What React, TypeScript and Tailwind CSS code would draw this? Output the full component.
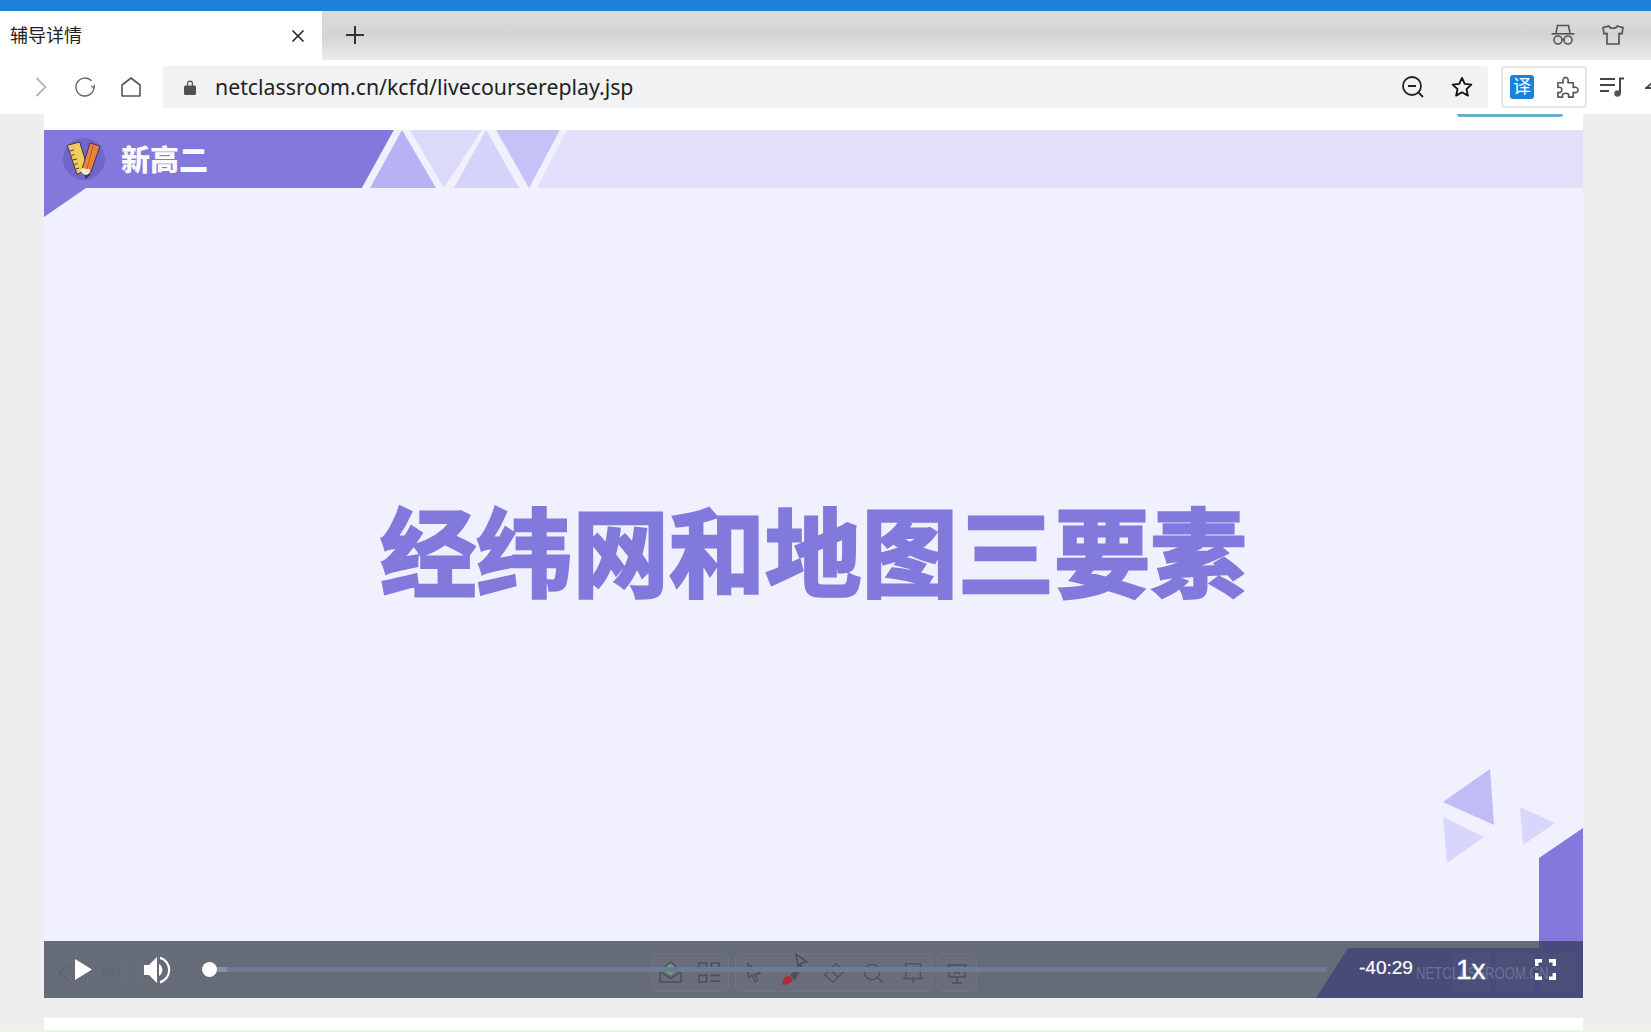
import React from "react";

const ghost = "#4c505e";

function Tab() {
  return (
    <div className="flex h-[49px] items-center bg-gradient-to-b from-[#dcdcdc] via-[#d4d4d4] to-[#ebebeb]">
      <div className="flex h-full w-[322px] items-center bg-white pl-[10px] pr-[17px]">
        <span className="flex-1 text-[18px] leading-[50px] text-[#222]">辅导详情</span>
        <svg width="14" height="14" viewBox="0 0 14 14" fill="none" stroke="#222" strokeWidth="1.6"><path d="M1.5 1.5 12.5 12.5M12.5 1.5 1.5 12.5" /></svg>
      </div>
      <svg className="ml-[23px] -mt-[2px]" width="20" height="20" viewBox="0 0 20 20" fill="none" stroke="#333" strokeWidth="2"><path d="M10 1v18M1 10h18" /></svg>
      <div className="flex-1" />
      <svg className="-mt-[2px]" width="24" height="21" viewBox="0 0 24 21" fill="none" stroke="#555" strokeWidth="1.6">
        <path d="M5 9 6.5 1.5h11L19 9" />
        <path d="M0.5 9.8h23" />
        <circle cx="7" cy="16" r="4" />
        <circle cx="17" cy="16" r="4" />
        <path d="M11 15.5h2" />
      </svg>
      <svg className="ml-[27px] mr-[27px] -mt-[2px]" width="22" height="20" viewBox="0 0 22 20" fill="none" stroke="#555" strokeWidth="1.7" strokeLinejoin="round">
        <path d="M7 1 1 2.6l1 6.2 3-.4V19h12V8.400l3 .4 1-6.200L15 1c-.6 3-7.400 3-8 0Z" />
      </svg>
    </div>
  );
}

function Toolbar() {
  return (
    <div className="flex h-[54px] items-center overflow-hidden bg-white">
      <svg className="ml-[35px] shrink-0" width="12" height="20" viewBox="0 0 12 20" fill="none" stroke="#b5b5b5" strokeWidth="1.800"><path d="M1.500 1 10.500 10 1.500 19" /></svg>
      <svg className="ml-[28px] shrink-0" width="20" height="20" viewBox="0 0 20 20" fill="none" stroke="#666" strokeWidth="1.400">
        <path d="M16.500 3.800A9 9 0 1 0 19 10" />
        <path d="M16.200 9.200l2.800 1.300 1-3" />
      </svg>
      <svg className="ml-[26px] shrink-0" width="20" height="20" viewBox="0 0 20 20" fill="none" stroke="#555" strokeWidth="1.600" strokeLinejoin="round">
        <path d="M1 19V8l9-7 9 7v11Z" />
      </svg>
      <div className="ml-[22px] flex h-[42px] w-[1325px] shrink-0 items-center rounded-[2px] bg-[#f1f2f4] pl-[21px]">
        <svg width="12" height="16" viewBox="0 0 12 16" fill="#505050">
          <path d="M3 7V4.500a3 3 0 0 1 6 0V7H7.800V4.500a1.800 1.800 0 0 0-3.600 0V7Z" />
          <rect x="0" y="6.500" width="12" height="9.500" rx="1.500" />
        </svg>
        <span className="ml-[19px] flex-1 font-['Noto_Sans','Open_Sans',sans-serif] text-[21.3px] leading-[42px] text-[#222]">netclassroom.cn/kcfd/livecoursereplay.jsp</span>
        <svg width="22" height="22" viewBox="0 0 22 22" fill="none" stroke="#222" strokeWidth="1.800">
          <circle cx="10" cy="10" r="9" />
          <path d="M6 10h8M16.500 16.500 21 21" />
        </svg>
        <svg className="ml-[27px] mr-[15px]" width="22" height="22" viewBox="0 0 24 24" fill="none" stroke="#111" strokeWidth="2" strokeLinejoin="round">
          <path d="m12 2 3 6.600 7.200.8-5.300 4.900 1.500 7.100L12 17.800l-6.400 3.600 1.500-7.100L1.800 9.400 9 8.600Z" />
        </svg>
      </div>
      <div className="ml-[13px] flex h-[42px] w-[86px] shrink-0 items-center rounded-[4px] border-2 border-[#e6e6e6] pl-[7px]">
        <div className="flex h-[24px] w-[24px] items-center justify-center rounded-[3px] bg-[#1a82dc] text-[18px] leading-[24px] text-white">译</div>
        <svg className="ml-[22px]" width="23" height="23" viewBox="0 0 24 24" fill="none" stroke="#555" strokeWidth="1.700" strokeLinejoin="round">
          <path d="M2 7h5.500c-1-3 .5-5.500 2.500-5.500S13.500 4 12.500 7H18v5c3-1 5 .5 5 2.500s-2 3.500-5 2.500v5h-5c1-3-.5-4-3-4s-4 1-3 4H2v-5c3 1 4-.5 4-2.500S5 11 2 12Z" />
        </svg>
      </div>
      <svg className="ml-[13px] shrink-0" width="24" height="20" viewBox="0 0 24 20" fill="none" stroke="#444" strokeWidth="2">
        <path d="M0 2h15M0 8h15M0 14h9M20 17V1.500h4" />
        <circle cx="17.500" cy="16.500" r="3.200" fill="#555" stroke="none" />
      </svg>
      <svg className="ml-[21px] shrink-0" width="8" height="10" viewBox="0 0 8 10" fill="none" stroke="#444" strokeWidth="1.800"><path d="M7 1 1 6h7" /></svg>
    </div>
  );
}

function SlideArt() {
  return (
    <svg className="absolute inset-0" width="1539" height="868" viewBox="0 0 1539 868">
      <rect width="1539" height="58" fill="#e2dffa" />
      <path d="M0 0H350L318 58H42L0 87Z" fill="#8379dd" />
      <path d="M318 58 350 0H523L493 58Z" fill="#f0f0fe" />
      <path d="M326 58 358 0 392 58Z" fill="#b6b2f5" />
      <path d="M366 0H438L400 58Z" fill="#dcdafa" />
      <path d="M410 58 442 0 475 58Z" fill="#d5d3f9" />
      <path d="M452 0H516L485 58Z" fill="#c5c2f7" />
      <path d="M1446 639 1399 672 1450 695Z" fill="#c0bcf5" />
      <path d="M1399 687 1440 707 1403 733Z" fill="#d8d6fa" />
      <path d="M1476 677 1511 693 1479 715Z" fill="#d8d6fa" />
      <path d="M1495 728 1539 698V820H1495Z" fill="#8379dd" />
    </svg>
  );
}

function Logo() {
  return (
    <svg width="42" height="42" viewBox="0 0 42 42">
      <circle cx="21" cy="21" r="21" fill="#6f66c8" />
      <path d="M4.300 7.300 16.700 4 25 31 14 36.300Z" fill="#f4cd57" stroke="#3b3566" strokeWidth="1" />
      <path d="M7 13l4-1.200M8.500 17.500l3-1M10 22l4-1.200M11.500 26.500l3-1M13 31l3-1" stroke="#3b3566" strokeWidth="1" />
      <path d="M27 5 37 8 28 34 19 31Z" fill="#ee8139" stroke="#3b3566" strokeWidth="1" />
      <path d="M30.500 6.500 23.500 32.500" stroke="#b85a20" strokeWidth="1" />
      <path d="M19 33 28 36 23 41Z" fill="#3b3566" />
      <path d="M18 31c2-2 4 0 5 0s3-1 4 1-2 5-4 5-6-3-5-6Z" fill="#f7e7c4" />
    </svg>
  );
}

function Ghost() {
  const box = "h-[39px] rounded-[5px] border border-[#71747f] bg-[#6a6e7a]";
  const faint = "h-[39px] rounded-[4px] border border-[#6b6f7b]";
  return (
    <div className="absolute inset-0">
      <div className={`absolute left-[8px] top-[12px] flex w-[36px] items-center pl-[4px] ${faint}`}>
        <svg width="14" height="20" viewBox="0 0 14 20" fill="none" stroke="#5e626f" strokeWidth="1.500"><path d="M12 2 2 10l10 8" /></svg>
      </div>
      <div className={`absolute left-[49px] top-[12px] flex w-[35px] items-center justify-center text-[10px] text-[#5e626f] ${faint}`}>2/23</div>
      <div className={`absolute left-[92px] top-[12px] w-[39px] ${faint}`} />
      <div className={`absolute left-[607px] top-[12px] flex w-[78px] items-center justify-between px-[7px] ${box}`}>
        <svg width="23" height="23" viewBox="0 0 24 24" fill="none" stroke={ghost} strokeWidth="1.600">
          <path d="M4 9 12 2l8 7-8 6Z" fill="#6f9a83" stroke="none" />
          <path d="M1 10v12h22V10" />
          <path d="M1 11l11 7 11-7M5 7l7-6 7 6" />
        </svg>
        <svg width="23" height="23" viewBox="0 0 24 24" fill="none" stroke={ghost} strokeWidth="1.600">
          <path d="M1 2h8v7H1ZM14 2h8v7h-8ZM1 15h8v7H1ZM13 15h10M13 21h10" />
        </svg>
      </div>
      <div className={`absolute left-[691px] top-[12px] flex w-[198px] items-center justify-between pl-[10px] pr-[8px] ${box}`}>
        <svg width="16" height="21" viewBox="0 0 18 22" fill="none" stroke={ghost} strokeWidth="1.500"><path d="M2 1 16 12l-6 1 3 7-3 1-3-7-4 3Z" /></svg>
        <svg className="mt-[1px]" width="23" height="26" viewBox="0 0 23 26">
          <path d="M9 15 22 3 14 21Z" fill={ghost} />
          <path d="M2 25c-2-3 1-9 5-9s5 4 4 5-5 4-9 4Z" fill="#b12a35" />
        </svg>
        <svg width="22" height="22" viewBox="0 0 24 24" fill="none" stroke={ghost} strokeWidth="1.500"><path d="M14 2 23 10 11 22 2 14ZM7 8l10 9" /></svg>
        <svg width="20" height="20" viewBox="0 0 22 22" fill="none" stroke={ghost} strokeWidth="1.500"><circle cx="10" cy="10" r="8.500" /><path d="m16 16 5 5" /></svg>
        <svg width="22" height="22" viewBox="0 0 24 24" fill="none" stroke={ghost} strokeWidth="1.500"><path d="M4 2h16v16H4ZM1 18h22M12 18v5" /></svg>
      </div>
      <div className={`absolute left-[893px] top-[12px] flex w-[40px] items-center justify-center ${box}`}>
        <svg width="22" height="22" viewBox="0 0 22 22" fill="none" stroke={ghost} strokeWidth="1.500"><path d="M1 3h20M3 3v12h16V3M11 15v6M6 21h10M8 7l6 5M14 7l-6 5" /></svg>
      </div>
      <svg className="absolute left-[751px] top-[12px]" width="13" height="14" viewBox="0 0 13 14" fill="#6a6e7a" stroke="#454854" strokeWidth="1.200"><path d="M1 1 12 9l-5 .5-4 3.500Z" /></svg>
      <svg className="absolute inset-0" width="1539" height="57" viewBox="0 0 1539 57"><path d="M1272 57 1304 7H1539V57Z" fill="#484a78" /><path d="M1495 0H1539V7H1495Z" fill="#494a7e" /></svg>
      <div className="absolute left-[1409px] top-[12px] h-[39px] w-[37px] bg-[#4d4f7b]" />
      <div className="absolute left-[1452px] top-[12px] h-[39px] w-[38px] bg-[#4d4f7b]" />
      <div className="absolute left-[1496px] top-[12px] h-[39px] w-[36px] bg-[#4d4f7b]" />
    </div>
  );
}

function ControlBar() {
  return (
    <div className="absolute bottom-0 left-0 right-0 h-[57px] bg-[#666b78]">
      <Ghost />
      <span className="absolute left-[1372px] top-[23px] origin-left scale-x-[0.77] font-['Liberation_Sans',sans-serif] text-[17px] leading-[20px] text-[#70728f]">NETCLASSROOM.CN</span>
      <div className="relative flex h-full items-center pl-[31px] font-['Liberation_Sans',sans-serif] text-white">
        <svg width="17" height="21" viewBox="0 0 17 21" fill="#fff"><path d="M0 0 17 10.500 0 21Z" /></svg>
        <svg className="ml-[52px]" width="27" height="28" viewBox="0 0 27 28" fill="#fff">
          <path d="M0 9h5l8-8v26l-8-8H0Z" />
          <path d="M15 8a7 7 0 0 1 0 12Z" />
          <path d="M16 0.500a14 14 0 0 1 0 27v-2.500a11.500 11.500 0 0 0 0-22Z" />
        </svg>
        <div className="ml-[31px] h-[15px] w-[15px] rounded-full bg-white" />
        <div className="flex h-[5px] w-[1110px] bg-[#6c7c93]">
          <div className="h-full w-[10px] bg-[#8292a8]" />
        </div>
        <span className="ml-[32px] w-[98px] text-[19px] leading-[19px] -mt-[4px] [-webkit-text-stroke:0.2px_#fff]">-40:29</span>
        <span className="w-[79px] text-[28px] leading-[30px] -ml-px [-webkit-text-stroke:0.4px_#fff]">1x</span>
        <svg width="21" height="21" viewBox="0 0 21 21" fill="none" stroke="#fff" strokeWidth="3.500">
          <path d="M1.700 7V1.700H7M14 1.700h5.300V7M19.300 14v5.300H14M7 19.300H1.700V14" />
        </svg>
      </div>
    </div>
  );
}

function Slide() {
  return (
    <div className="relative flex h-[868px] flex-col bg-[#f0f0fe]">
      <SlideArt />
      <div className="relative flex h-[58px] items-center pl-[19px]">
        <Logo />
        <span className="ml-[16px] mt-[3px] text-[29px] font-black leading-[58px] text-[#fbfbff]">新高二</span>
      </div>
      <div className="relative flex flex-1 items-center justify-center pb-[74px]">
        <span className="text-[96px] font-bold leading-[110px] tracking-[0.3px] text-[#8279dc] [-webkit-text-stroke:3px_#8279dc]">经纬网和地图三要素</span>
      </div>
      <ControlBar />
    </div>
  );
}

export default function App() {
  return (
    <div className="flex h-[1032px] w-[1651px] flex-col overflow-hidden bg-[#eeeeee] font-['Liberation_Sans','Noto_Sans_CJK_SC',sans-serif]">
      <div className="h-[11px] bg-[#1b82d7]" />
      <Tab />
      <Toolbar />
      <div className="flex flex-1 flex-col pl-[44px] pr-[68px]">
        <div className="flex h-[16px] justify-end bg-white pr-[20px]">
          <div className="h-[3px] w-[106px] rounded-b-[3px] bg-[#64b2c9]" />
        </div>
        <Slide />
        <div className="mt-[20px] flex-1 bg-white" />
      </div>
      <div className="h-[2px] bg-[#e6f8e2]" />
    </div>
  );
}
